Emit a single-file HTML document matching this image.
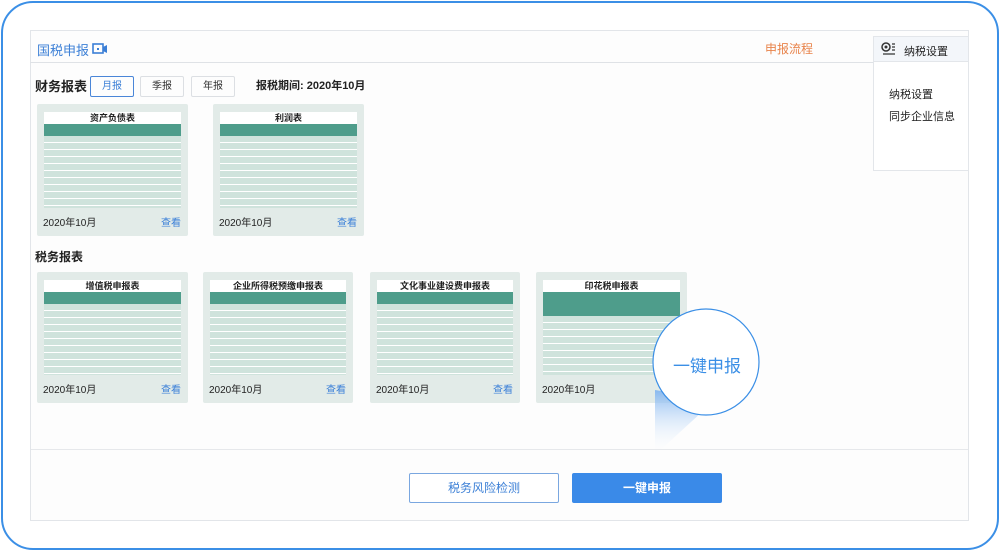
<!DOCTYPE html>
<html><head><meta charset="utf-8"><style>
*{margin:0;padding:0;box-sizing:border-box}
body{width:1000px;height:551px;background:#fff;font-family:"Liberation Sans","Noto Sans CJK SC",sans-serif;position:relative;overflow:hidden}
.frame{position:absolute;left:1px;top:1px;width:998px;height:549px;border:2px solid #3b8fe6;border-radius:32px}
.panel{position:absolute;left:30px;top:30px;width:939px;height:491px;border:1px solid #e2e5e9;background:#fdfdfd}
.abs{position:absolute}
.hdr{left:30px;top:62px;width:939px;height:1px;background:#dfe2e6}
.card{position:absolute;background:#e2ebe8;border-radius:2px}
.tbl{position:absolute;left:7px;top:8px;right:7px;bottom:28px;background:#fff;overflow:hidden}
.tt{height:12px;font-size:9px;font-weight:bold;text-align:center;line-height:12px;color:#222}
.th{background:#4e9d8b;height:12px}
.rows{position:absolute;left:0;right:0;top:24px;bottom:0;background:repeating-linear-gradient(#cfe3dc 0 6px,#fff 6px 7px)}
.date{position:absolute;left:6px;bottom:7px;font-size:10px;color:#222}
.look{position:absolute;right:7px;bottom:7px;font-size:10px;color:#3a7fd8}
.btn{position:absolute;top:473px;height:30px;width:150px;font-size:12px;text-align:center;line-height:28px;border-radius:2px}
</style></head><body>
<div class="frame"></div>
<div class="panel"></div>
<div class="abs hdr"></div>
<div class="abs" style="left:37px;top:40px;font-size:13px;color:#3b7fd6">国税申报</div>
<svg class="abs" style="left:92px;top:43px" width="16" height="12"><rect x="1" y="1" width="10" height="9" fill="none" stroke="#3b7fd6" stroke-width="1.6"/><rect x="5" y="5" width="2" height="2" fill="#3b7fd6"/><path d="M11 4l4-2v8l-4-2z" fill="#3b7fd6"/></svg>
<div class="abs" style="left:765px;top:40px;font-size:12px;color:#e8834a">申报流程</div>
<div class="abs" style="left:873px;top:36px;width:96px;height:135px;border:1px solid #e3e6ea;background:#fff"></div>
<div class="abs" style="left:874px;top:37px;width:94px;height:25px;background:#f3f6fa;border-bottom:1px solid #e3e6ea"></div>
<svg class="abs" style="left:881px;top:42px" width="16" height="14"><circle cx="5" cy="5" r="4" fill="none" stroke="#333" stroke-width="1.5"/><circle cx="5" cy="5" r="1.5" fill="#333"/><path d="M11 2h3M11 5h3M11 8h3M2 12h12" stroke="#333" stroke-width="1.2"/></svg>
<div class="abs" style="left:904px;top:43px;font-size:11px;color:#222">纳税设置</div>
<div class="abs" style="left:889px;top:86px;font-size:11px;color:#222">纳税设置</div>
<div class="abs" style="left:889px;top:108px;font-size:11px;color:#222">同步企业信息</div>

<div class="abs" style="left:35px;top:76px;font-size:13px;font-weight:bold;color:#222">财务报表</div>
<div class="abs" style="left:90px;top:76px;width:44px;height:21px;border:1px solid #4a86d8;border-radius:2px;font-size:10px;color:#3b7fd6;text-align:center;line-height:19px">月报</div>
<div class="abs" style="left:140px;top:76px;width:44px;height:21px;border:1px solid #dcdfe3;border-radius:2px;font-size:10px;color:#333;text-align:center;line-height:19px">季报</div>
<div class="abs" style="left:191px;top:76px;width:44px;height:21px;border:1px solid #dcdfe3;border-radius:2px;font-size:10px;color:#333;text-align:center;line-height:19px">年报</div>
<div class="abs" style="left:256px;top:77px;font-size:11px;color:#222;font-weight:bold">报税期间: 2020年10月</div>

<div class="card" style="left:37px;top:104px;width:151px;height:132px"><div class="tbl"><div class="tt">资产负债表</div><div class="th"></div><div class="rows"></div></div><div class="date">2020年10月</div><div class="look">查看</div></div>
<div class="card" style="left:213px;top:104px;width:151px;height:132px"><div class="tbl"><div class="tt">利润表</div><div class="th"></div><div class="rows"></div></div><div class="date">2020年10月</div><div class="look">查看</div></div>

<div class="abs" style="left:35px;top:248px;font-size:12px;font-weight:bold;color:#222">税务报表</div>
<div class="card" style="left:37px;top:272px;width:151px;height:131px"><div class="tbl"><div class="tt">增值税申报表</div><div class="th"></div><div class="rows"></div></div><div class="date">2020年10月</div><div class="look">查看</div></div>
<div class="card" style="left:203px;top:272px;width:150px;height:131px"><div class="tbl"><div class="tt">企业所得税预缴申报表</div><div class="th"></div><div class="rows"></div></div><div class="date">2020年10月</div><div class="look">查看</div></div>
<div class="card" style="left:370px;top:272px;width:150px;height:131px"><div class="tbl"><div class="tt">文化事业建设费申报表</div><div class="th"></div><div class="rows"></div></div><div class="date">2020年10月</div><div class="look">查看</div></div>
<div class="card" style="left:536px;top:272px;width:151px;height:131px"><div class="tbl"><div class="tt">印花税申报表</div><div class="th" style="height:24px"></div><div class="rows" style="top:36px"></div></div><div class="date">2020年10月</div></div>

<svg class="abs" style="left:640px;top:300px" width="130" height="160"><defs><linearGradient id="g" x1="0" y1="1" x2="0" y2="0"><stop offset="0" stop-color="#fff" stop-opacity="0"/><stop offset="1" stop-color="#7fb3f0" stop-opacity=".9"/></linearGradient></defs><path d="M15 90L15 155L75 100Z" fill="url(#g)"/><circle cx="66" cy="62" r="53" fill="#fff" stroke="#3b8fe6" stroke-width="1.2"/></svg>
<div class="abs" style="left:673px;top:352px;font-size:17px;color:#3b8fe6">一键申报</div>

<div class="abs" style="left:31px;top:449px;width:937px;height:1px;background:#e6e8eb"></div>
<div class="btn" style="left:409px;border:1px solid #7aa7e0;color:#3b7fd6;background:#fff">税务风险检测</div>
<div class="btn" style="left:572px;background:#3a8ae8;color:#fff;font-weight:bold;line-height:30px">一键申报</div>
</body></html>
